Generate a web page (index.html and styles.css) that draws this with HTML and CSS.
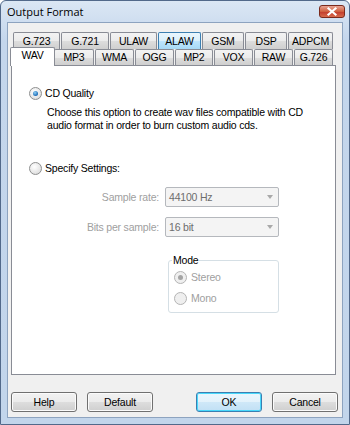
FILE: index.html
```html
<!DOCTYPE html>
<html lang="en">

<head>
    <meta charset="UTF-8" />
    <title>Output Format</title>
    <link rel="stylesheet" href="styles.css">
</head>

<body>
    <div class="window">
        <div class="titlebar">
            <span class="title">Output Format</span>
            <span class="close">
                <svg viewBox="0 0 26 13" width="26" height="13">
                    <path d="M9.5 3.5 L16.5 9.5 M16.5 3.5 L9.5 9.5" stroke="#fff" stroke-width="2.2" stroke-linecap="square" />
                </svg>
            </span>
        </div>

        <div class="client">
            <div class="tabs">
                <div class="tab-row back">
                    <div class="tab">G.723</div>
                    <div class="tab">G.721</div>
                    <div class="tab">ULAW</div>
                    <div class="tab hot">ALAW</div>
                    <div class="tab">GSM</div>
                    <div class="tab">DSP</div>
                    <div class="tab">ADPCM</div>
                </div>
                <div class="tab-row front">
                    <div class="tab active">WAV</div>
                    <div class="tab">MP3</div>
                    <div class="tab">WMA</div>
                    <div class="tab">OGG</div>
                    <div class="tab">MP2</div>
                    <div class="tab">VOX</div>
                    <div class="tab">RAW</div>
                    <div class="tab">G.726</div>
                </div>
            </div>

            <div class="panel">
                <div class="option first">
                    <span class="radio checked"></span>
                    <span>CD Quality</span>
                </div>
                <p class="hint">Choose this option to create wav files compatible with CD<br>audio format in order to burn custom audio cds.</p>

                <div class="option second">
                    <span class="radio"></span>
                    <span>Specify Settings:</span>
                </div>

                <div class="settings">
                    <span class="field-label">Sample rate:</span>
                    <div class="combo"><span>44100 Hz</span><span class="arrow"></span></div>
                    <span class="field-label">Bits per sample:</span>
                    <div class="combo"><span>16 bit</span><span class="arrow"></span></div>
                </div>

                <fieldset class="mode">
                    <legend>Mode</legend>
                    <div class="option off">
                        <span class="radio checked"></span>
                        <span>Stereo</span>
                    </div>
                    <div class="option off">
                        <span class="radio"></span>
                        <span>Mono</span>
                    </div>
                </fieldset>
            </div>

            <div class="buttons">
                <div class="group">
                    <button class="btn">Help</button>
                    <button class="btn">Default</button>
                </div>
                <div class="group">
                    <button class="btn default">OK</button>
                    <button class="btn">Cancel</button>
                </div>
            </div>
        </div>
    </div>
</body>

</html>
```

FILE: styles.css
```css
html,
body {
    margin: 0;
    padding: 0;
    background: #fff;
}

body {
    font-family: Tahoma, "Liberation Sans", sans-serif;
    font-size: 10.5px;
    letter-spacing: -0.2px;
    color: #000;
}

.window {
    width: 350px;
    height: 425px;
    box-sizing: border-box;
    border: 1px solid #52698a;
    border-radius: 6px 6px 0 0;
    background: linear-gradient(#dbe7f4, #c4d6ec 40px, #c2d5eb);
    display: flex;
    flex-direction: column;
}

.titlebar {
    height: 20px;
    display: flex;
    align-items: center;
    justify-content: space-between;
    padding: 0 4px 0 6px;
}

.title {
    font-family: "Open Sans", "Liberation Sans", sans-serif;
    font-size: 11px;
    letter-spacing: 0;
    color: #000;
    margin-top: 1px;
}

.close {
    width: 26px;
    height: 13px;
    box-sizing: border-box;
    border: 1px solid #7a2a1c;
    border-radius: 3px;
    background: linear-gradient(#e8a493, #d0603f 50%, #c0392b 51%, #d86b4b);
    display: flex;
    align-items: center;
    justify-content: center;
    margin-top: 1px;
}

.close svg {
    display: block;
    margin: -1px;
}

.client {
    flex: 1;
    margin: 1px 6px 6px;
    border: 1px solid #8da3bf;
    background: #f0f0f0;
    display: flex;
    flex-direction: column;
}

/* tabs */

.tabs {
    margin: 9px 6px 0 4px;
}

.tab-row {
    display: grid;
}

.tab-row.back {
    margin-left: 1px;
    margin-right: 2px;
    grid-template-columns: 48px 49px 48px 44px 43px 43px 46px;
    height: 17px;
}

.tab-row.front {
    grid-template-columns: 42px 41px 40px 40px 39px 40px 40px 40px;
    height: 16px;
    margin-right: 2px;
}

.tab {
    box-sizing: border-box;
    border: 1px solid #898c95;
    border-bottom: none;
    border-radius: 2px 2px 0 0;
    margin-right: 1px;
    background: linear-gradient(#f3f3f3, #ebebeb 50%, #dddddd 51%, #cfcfcf);
    display: flex;
    align-items: center;
    justify-content: center;
    line-height: 13px;
}

.tab.hot {
    border-color: #3c7fb1;
    background: linear-gradient(#eaf6fd, #d9f0fc 50%, #bee6fd 51%, #a7d9f5);
}

.tab.active {
    position: relative;
    z-index: 1;
    margin: -2px -1px -1px -2px;
    background: #fff;
    padding-bottom: 3px;
}

.panel {
    margin: 0 6px 0 3px;
    height: 310px;
    box-sizing: border-box;
    border: 1px solid #898c95;
    background: #fff;
    padding: 0 0 0 17px;
}

/* radios */

.option {
    display: flex;
    align-items: center;
    gap: 3px;
    height: 13px;
    line-height: 13px;
}

.option.first {
    margin-top: 21px;
}

.option.second {
    margin-top: 30px;
}

.radio {
    width: 13px;
    height: 13px;
    box-sizing: border-box;
    border-radius: 50%;
    border: 1px solid #8e8f8f;
    background: radial-gradient(circle at 40% 35%, #ffffff, #e6e6e6 60%, #d2d2d2);
    display: flex;
    align-items: center;
    justify-content: center;
}

.radio.checked::after {
    content: "";
    width: 5px;
    height: 5px;
    border-radius: 50%;
    background: radial-gradient(circle at 40% 35%, #8fd0f6, #1b6ab5 70%, #134f8a);
}

.hint {
    margin: 6px 0 0 18px;
    line-height: 13px;
}

.settings {
    display: grid;
    grid-template-columns: 130px 114px;
    column-gap: 6px;
    row-gap: 10px;
    align-items: center;
    margin: 12px 0 0 -17px;
    padding-left: 17px;
}

.field-label {
    text-align: right;
    color: #a0a0a0;
}

.combo {
    height: 20px;
    box-sizing: border-box;
    border: 1px solid #b5b8bd;
    border-radius: 2px;
    background: #f4f4f4;
    color: #6d6d6d;
    display: flex;
    align-items: center;
    justify-content: space-between;
    padding: 0 5px 0 3px;
}

.arrow {
    width: 0;
    height: 0;
    border-left: 3.5px solid transparent;
    border-right: 3.5px solid transparent;
    border-top: 4px solid #a9a9a9;
}

.mode {
    margin: 17px 0 0 139px;
    width: 111px;
    box-sizing: border-box;
    border: 1px solid #d5dfe5;
    border-radius: 3px;
    padding: 4px 5px 7px;
    min-width: 0;
}

.mode legend {
    padding: 0 1px;
    margin-left: -2px;
    line-height: 13px;
}

.option.off {
    color: #a0a0a0;
    gap: 4px;
}

.option.off + .option.off {
    margin-top: 8px;
}

.option.off .radio {
    border-color: #b4b4b4;
    background: #efefef;
}

.option.off .radio.checked::after {
    background: #a4a4a4;
}

/* buttons */

.buttons {
    margin-top: auto;
    margin-bottom: 5px;
    display: flex;
    justify-content: space-between;
    padding: 0 4px 0 3px;
}

.group {
    display: flex;
    gap: 10px;
}

.btn {
    width: 66px;
    height: 20px;
    box-sizing: border-box;
    border: 1px solid #707070;
    border-radius: 3px;
    background: linear-gradient(#f2f2f2, #ebebeb 50%, #dddddd 51%, #cfcfcf);
    font-family: inherit;
    font-size: inherit;
    letter-spacing: inherit;
    color: #000;
    padding: 0;
    box-shadow: inset 0 0 0 1px #fbfbfb;
}

.btn.default {
    border-color: #3c7fb1;
    box-shadow: inset 0 0 0 1px #48d8fb;
    background: linear-gradient(#eaf6fd, #e3f2fb 50%, #cfe8f8 51%, #c1e0f5);
}
```
